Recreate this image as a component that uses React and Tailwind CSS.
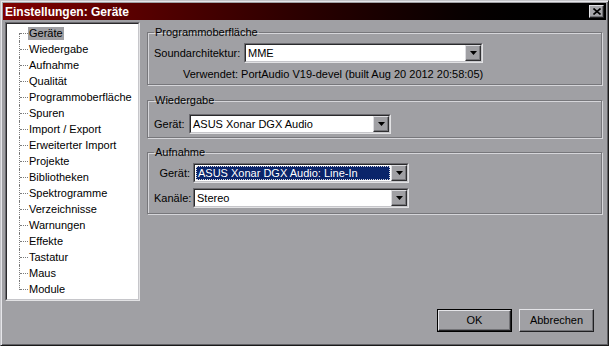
import React from 'react';

// Tree entries on the left side of the dialog
const PAGES = [
    'Geräte',
    'Wiedergabe',
    'Aufnahme',
    'Qualität',
    'Programmoberfläche',
    'Spuren',
    'Import / Export',
    'Erweiterter Import',
    'Projekte',
    'Bibliotheken',
    'Spektrogramme',
    'Verzeichnisse',
    'Warnungen',
    'Effekte',
    'Tastatur',
    'Maus',
    'Module',
];

const TreeRow = ({ label, first, last, selected }) => (
    <div className="relative h-[16px] flex items-center pl-[21px]">
        <span
            className={
                first
                    ? 'absolute left-[12px] top-[8px] bottom-0 border-l border-dotted border-[#7a7a7a]'
                    : last
                    ? 'absolute left-[12px] top-0 h-[9px] border-l border-dotted border-[#7a7a7a]'
                    : 'absolute left-[12px] top-0 bottom-0 border-l border-dotted border-[#7a7a7a]'
            }
        />
        <span className="absolute left-[13px] top-[8px] w-[8px] border-t border-dotted border-[#7a7a7a]" />
        <span className={selected ? 'px-[1px] leading-[13px] bg-[#a0a0a4]' : 'px-[1px] leading-[13px]'}>
            {label}
        </span>
    </div>
);

const Arrow = () => (
    <svg width="7" height="4" viewBox="0 0 7 4">
        <polygon points="0,0 7,0 3.5,4" fill="#000" />
    </svg>
);

const Combo = ({ className, value, selected }) => (
    <div className={`h-[20px] bg-white border border-t-[#6c6b70] border-l-[#6c6b70] border-b-[#e2e2e4] border-r-[#e2e2e4] ${className}`}>
        <div className="h-full flex border border-t-[#2a2a2c] border-l-[#2a2a2c] border-b-[#c6c6ca] border-r-[#c6c6ca]">
            <div className="flex-1 flex p-[1px]">
                {selected ? (
                    <span className="flex-1 flex items-center pl-[1px] bg-[#0a246a] text-white border border-dotted border-[#d8d8e0]">
                        {value}
                    </span>
                ) : (
                    <span className="flex-1 flex items-center pl-[1px]">{value}</span>
                )}
            </div>
            <div className="w-[16px] h-full flex items-center justify-center bg-[#a0a0a4] border border-t-[#dcdce0] border-l-[#dcdce0] border-b-[#303032] border-r-[#303032] shadow-[inset_-1px_-1px_0_#76767a]">
                <Arrow />
            </div>
        </div>
    </div>
);

const Group = ({ title, className, children }) => (
    <fieldset className={`border border-[#77777b] shadow-[inset_1px_1px_0_#d6d6da,1px_1px_0_#d6d6da] px-[6px] ${className}`}>
        <legend className="px-[1px] leading-[13px]">{title}</legend>
        {children}
    </fieldset>
);

const Button = ({ children, isDefault }) => (
    <div className={isDefault ? 'w-[75px] h-[23px] border border-black' : 'w-[75px] h-[23px]'}>
        <div className="w-full h-full flex items-center justify-center border border-t-[#e4e4e8] border-l-[#e4e4e8] border-b-[#202022] border-r-[#202022] shadow-[inset_-1px_-1px_0_#727276]">
            {children}
        </div>
    </div>
);

const App = () => {
    return (
        <div
            className="w-[609px] h-[346px] flex flex-col bg-[#a0a0a4] p-[2px] border border-t-[#c4c4c8] border-l-[#c4c4c8] border-b-[#1a1a1a] border-r-[#1a1a1a] shadow-[inset_1px_1px_0_#e6e6ea,inset_-1px_-1px_0_#606064] text-[11px] text-black"
            style={{ fontFamily: '"Liberation Sans", Arial, sans-serif' }}
        >
            {/* title bar */}
            <div className="h-[17px] flex items-center justify-between pl-[2px] pr-[2px] bg-linear-to-r from-[#800000] via-[#2a0000] to-[#000000]">
                <span className="font-bold text-white text-[12px] leading-[14px]">Einstellungen: Geräte</span>
                <div className="w-[15px] h-[13px] flex items-center justify-center bg-[#a6a6aa] border border-t-[#e4e4e8] border-l-[#e4e4e8] border-b-[#202022] border-r-[#202022] shadow-[inset_-1px_-1px_0_#727276]">
                    <svg width="8" height="7" viewBox="0 0 8 7">
                        <path d="M0.5 0.5 L7.5 6.5 M7.5 0.5 L0.5 6.5" stroke="#000" strokeWidth="1.6" />
                    </svg>
                </div>
            </div>

            <div className="flex-1 flex px-[2px]">
                {/* page tree */}
                <div className="mt-[2px] w-[135px] h-[279px] bg-white border border-t-[#6c6b70] border-l-[#6c6b70] border-b-[#e2e2e4] border-r-[#e2e2e4]">
                    <div className="h-full border border-t-[#2a2a2c] border-l-[#2a2a2c] border-b-[#c6c6ca] border-r-[#c6c6ca] pt-[1px]">
                        {PAGES.map((p, i) => (
                            <TreeRow
                                key={p}
                                label={p}
                                first={i === 0}
                                last={i === PAGES.length - 1}
                                selected={i === 0}
                            />
                        ))}
                    </div>
                </div>

                {/* settings */}
                <div className="ml-[7px] w-[455px] flex flex-col pt-[6px]">
                    <Group title="Programmoberfläche" className="pb-[3px]">
                        <div className="mt-[4px] flex items-center">
                            <span className="w-[90px]">Soundarchitektur:</span>
                            <Combo className="w-[239px]" value="MME" />
                        </div>
                        <div className="mt-[5px] ml-[29px] leading-[13px]">
                            Verwendet: PortAudio V19-devel (built Aug 20 2012 20:58:05)
                        </div>
                    </Group>

                    <Group title="Wiedergabe" className="mt-[9px] pb-[3px]">
                        <div className="mt-[7px] flex items-center">
                            <span className="w-[35px]">Gerät:</span>
                            <Combo className="w-[202px]" value="ASUS Xonar DGX Audio" />
                        </div>
                    </Group>

                    <Group title="Aufnahme" className="mt-[8px] pb-[5px]">
                        <div className="mt-[4px] flex items-center">
                            <span className="w-[39px] pr-[3px] text-right">Gerät:</span>
                            <Combo className="w-[216px]" value="ASUS Xonar DGX Audio: Line-In" selected />
                        </div>
                        <div className="mt-[5px] flex items-center">
                            <span className="w-[39px] pr-[3px] text-right">Kanäle:</span>
                            <Combo className="w-[216px]" value="Stereo" />
                        </div>
                    </Group>

                    <div className="mt-auto mb-[11px] mr-[8px] flex justify-end gap-[7px]">
                        <Button isDefault>OK</Button>
                        <Button>Abbrechen</Button>
                    </div>
                </div>
            </div>
        </div>
    );
};

export default App;
